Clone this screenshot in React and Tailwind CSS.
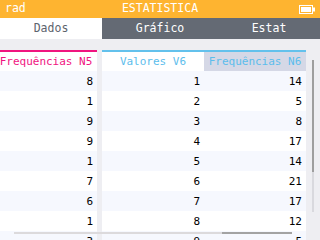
import React from 'react';

const rows = [
    [8, 1, 14],
    [1, 2, 5],
    [9, 3, 8],
    [9, 4, 17],
    [1, 5, 14],
    [7, 6, 21],
    [6, 7, 17],
    [1, 8, 12],
    [3, 9, 5],
];

const font = { fontFamily: '"DejaVu Sans Mono", "Liberation Mono", monospace' };

const Battery = () => (
    <svg width="16" height="9" viewBox="0 0 16 9" className="block">
        <rect x="0.5" y="0.5" width="13" height="8" fill="none" stroke="#fff" strokeWidth="1" />
        <rect x="2" y="2" width="10" height="5" fill="#fff" />
        <rect x="14" y="2.5" width="2" height="4" fill="#fff" />
    </svg>
);

const Column = ({ title, color, values, headerBg }) => (
    <div className="w-[102px] shrink-0 flex flex-col">
        <div className={`h-[2px] ${color === 'pink' ? 'bg-[#f0147f]' : 'bg-[#63c1ec]'}`} />
        <div
            className={`h-[19px] flex items-center justify-center whitespace-nowrap ${headerBg} ${color === 'pink' ? 'text-[#f0147f]' : 'text-[#5cbdec]'}`}
        >
            {title}
        </div>
        {values.map((v, i) => (
            <div
                key={i}
                className={`h-[20px] flex items-center justify-end pr-[4px] text-black ${i % 2 === 0 ? 'bg-[#f6f8fe]' : 'bg-white'}`}
            >
                {v}
            </div>
        ))}
    </div>
);

export default function App() {
    return (
        <div className="w-[320px] h-[240px] overflow-hidden relative bg-[#eeeef2] text-[11px] leading-none" style={font}>
            {/* status bar */}
            <div className="h-[18px] bg-[#feb430] flex items-center justify-between px-[5px] text-white relative text-[11.5px]">
                <span>rad</span>
                <span className="absolute left-0 right-0 text-center">ESTATISTICA</span>
                <Battery />
            </div>

            {/* tabs */}
            <div className="h-[21px] flex bg-[#646a74] text-[11.5px]">
                <div className="w-[102px] bg-white text-[#5d636d] flex items-center justify-center">Dados</div>
                <div className="w-[116px] text-white flex items-center justify-center">Gráfico</div>
                <div className="w-[102px] text-white flex items-center justify-center">Estat</div>
            </div>

            {/* table */}
            <div className="pt-[11px] flex -ml-[5px]">
                <Column title="Frequências N5" color="pink" headerBg="bg-white" values={rows.map(r => r[0])} />
                <div className="w-[5px] shrink-0" />
                <Column title="Valores V6" color="blue" headerBg="bg-white" values={rows.map(r => r[1])} />
                <Column title="Frequências N6" color="blue" headerBg="bg-[#d5d8e6]" values={rows.map(r => r[2])} />
            </div>

            {/* vertical scrollbar */}
            <div className="absolute left-[312px] top-[60px] w-[2px] h-[152px] bg-[#d9d9de]">
                <div className="w-full h-[112px] bg-[#9e9e9e]" />
            </div>

            {/* horizontal scrollbar */}
            <div className="absolute left-[14px] top-[232px] w-[278px] h-[2px] bg-[#dcdadc] flex justify-end">
                <div className="w-[70px] h-full bg-[#a3a3a3]" />
            </div>
        </div>
    );
}
